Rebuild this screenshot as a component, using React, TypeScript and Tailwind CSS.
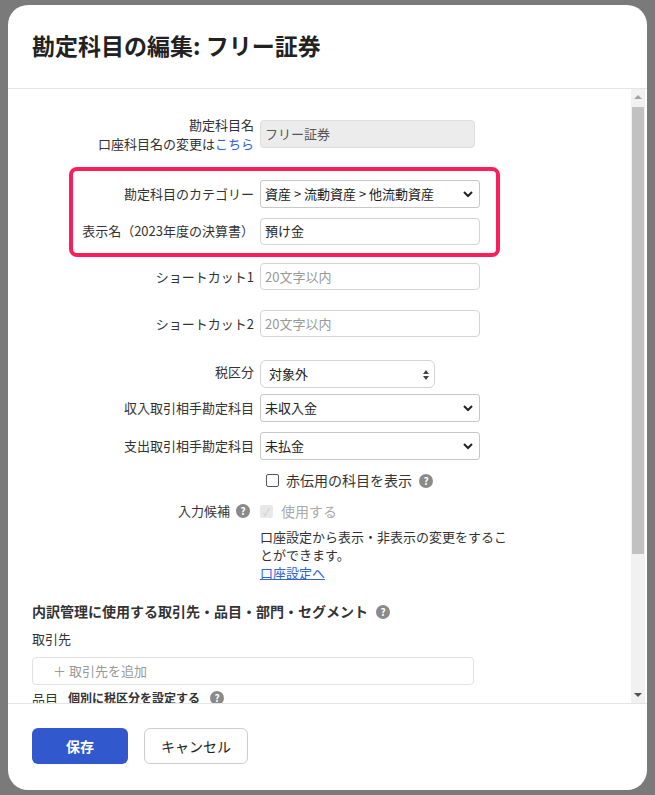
import React from "react";

const Help = () => (
  <span className="inline-flex w-[14px] h-[14px] rounded-full bg-[#8a8a8a] text-white text-[10px] font-bold items-center justify-center leading-none">?</span>
);

const Chevron = () => (
  <svg width="10" height="7" viewBox="0 0 10 7" className="absolute right-[6px] top-1/2 -translate-y-1/2">
    <path d="M1 1.5 L5 5.5 L9 1.5" stroke="#222" strokeWidth="2" fill="none" />
  </svg>
);

const Row = ({ label, children, mt = 0 }: { label: React.ReactNode; children: React.ReactNode; mt?: number }) => (
  <div className="flex items-center" style={{ marginTop: mt }}>
    <div className="w-[228px] text-right pr-[6px] text-[13px] text-[#333]">{label}</div>
    {children}
  </div>
);

const Input = ({ v, ph, w = "w-[220px]" }: { v?: string; ph?: string; w?: string }) => (
  <div className={`${w} h-[27px] border border-[#d4d4d4] rounded-[4px] bg-white px-[4px] flex items-center text-[13px] ${v ? "text-[#222]" : "text-[#999]"}`}>{v ?? ph}</div>
);

const Select = ({ v }: { v: string }) => (
  <div className="relative w-[220px] h-[28px] border border-[#c8c8c8] rounded-[3px] bg-white px-[4px] flex items-center text-[13px] text-[#222]">
    {v}
    <Chevron />
  </div>
);

export default function App() {
  return (
    <div className="w-[655px] h-[795px] bg-[#7a7a7a] pt-[5px] pl-[8px] overflow-hidden" style={{ fontFamily: '"Noto Sans CJK JP", "Noto Sans", sans-serif' }}>
      <div className="w-[639px] h-[785px] bg-white rounded-[20px] flex flex-col overflow-hidden">
        <div className="h-[84px] border-b border-[#e5e5e5] pl-[24px] pt-[23px] text-[23px] font-bold text-[#222]">勘定科目の編集: フリー証券</div>
        <div className="flex h-[615px] border-b border-[#e5e5e5]">
          <div className="flex-1 overflow-hidden pl-[24px] pt-[26px]">
            <div className="flex items-center">
              <div className="w-[228px] text-right pr-[6px] text-[13px] text-[#333] leading-[19px]">
                勘定科目名<br />口座科目名の変更は<span className="text-[#2f63d6]">こちら</span>
              </div>
              <div className="w-[215px] h-[28px] border border-[#ddd] rounded-[4px] bg-[#ececec] px-[4px] flex items-center text-[13px] text-[#555]">フリー証券</div>
            </div>
            <div className="ml-[37px] mt-[14px] w-[431px] h-[90px] border-[4px] border-[#fa1e5a] rounded-[8px] flex flex-col justify-center gap-[10px]">
              <div className="flex items-center">
                <div className="w-[187px] text-right pr-[6px] text-[13px] text-[#333]">勘定科目のカテゴリー</div>
                <Select v="資産 > 流動資産 > 他流動資産" />
              </div>
              <div className="flex items-center">
                <div className="w-[187px] text-right pr-[6px] text-[13px] text-[#333]">表示名（2023年度の決算書）</div>
                <Input v="預け金" />
              </div>
            </div>
            <Row label="ショートカット1" mt={6}><Input ph="20文字以内" /></Row>
            <Row label="ショートカット2" mt={20}><Input ph="20文字以内" /></Row>
            <div className="flex items-start mt-[23px]">
              <div className="w-[228px] text-right pr-[6px] text-[13px] text-[#333] pt-[2px]">税区分</div>
              <div className="relative w-[175px] h-[28px] border border-[#d4d4d4] rounded-[6px] bg-white px-[8px] flex items-center text-[13px] text-[#222]">
                対象外
                <svg width="6" height="10" viewBox="0 0 6 10" className="absolute right-[5px] top-[9px]"><path d="M0 4 L3 0 L6 4Z M0 6 L3 10 L6 6Z" fill="#444" /></svg>
              </div>
            </div>
            <Row label="収入取引相手勘定科目" mt={6}><Select v="未収入金" /></Row>
            <Row label="支出取引相手勘定科目" mt={10}><Select v="未払金" /></Row>
            <div className="flex items-center mt-[10px] ml-[234px] text-[14px] text-[#333] gap-[7px]">
              <span className="w-[13px] h-[13px] border border-[#555] rounded-[2px] bg-white" />
              赤伝用の科目を表示 <Help />
            </div>
            <div className="flex items-start mt-[10px]">
              <div className="w-[228px] flex justify-end items-center gap-[6px] pr-[10px] text-[13px] text-[#333]">入力候補 <Help /></div>
              <div className="w-[250px]">
                <div className="flex items-center gap-[8px] text-[14px] text-[#aaa]">
                  <span className="w-[13px] h-[13px] rounded-[2px] bg-[#e8e8e8] text-[10px] text-[#ccc] flex items-center justify-center">✓</span>使用する
                </div>
                <div className="mt-[6px] text-[13px] text-[#333] leading-[18px]">口座設定から表示・非表示の変更をすることができます。</div>
                <div className="text-[13px] text-[#2f63d6] underline leading-[18px]">口座設定へ</div>
              </div>
            </div>
            <div className="mt-[19px] flex items-center gap-[8px] text-[14px] font-bold text-[#333]">内訳管理に使用する取引先・品目・部門・セグメント <Help /></div>
            <div className="mt-[7px] text-[13px] text-[#333]">取引先</div>
            <div className="mt-[8px] w-[442px] h-[28px] border border-[#e2e2e2] rounded-[4px] flex items-center pl-[20px] text-[13px] text-[#999]">＋ 取引先を追加</div>
            <div className="mt-[4px] flex items-center gap-[10px] text-[13px] text-[#333]">品目 <span className="text-[12px] font-bold">個別に税区分を設定する</span> <Help /></div>
          </div>
          <div className="w-[14px] bg-[#f1f1f1] flex flex-col items-center mr-[2px]">
            <svg width="8" height="6" viewBox="0 0 8 6" className="mt-[5px]"><path d="M0 5 L4 1 L8 5Z" fill="#a3a3a3" /></svg>
            <div className="w-[12px] h-[447px] bg-[#c1c1c1] mt-[7px]" />
            <div className="flex-1" />
            <svg width="8" height="6" viewBox="0 0 8 6" className="mb-[5px]"><path d="M0 1 L4 5 L8 1Z" fill="#505050" /></svg>
          </div>
        </div>
        <div className="flex gap-[16px] pl-[24px] pt-[24px]">
          <div className="w-[96px] h-[36px] bg-[#3158cc] rounded-[6px] text-white text-[14px] font-bold flex items-center justify-center">保存</div>
          <div className="w-[104px] h-[36px] border border-[#ccc] rounded-[6px] text-[#222] text-[14px] flex items-center justify-center">キャンセル</div>
        </div>
      </div>
    </div>
  );
}
